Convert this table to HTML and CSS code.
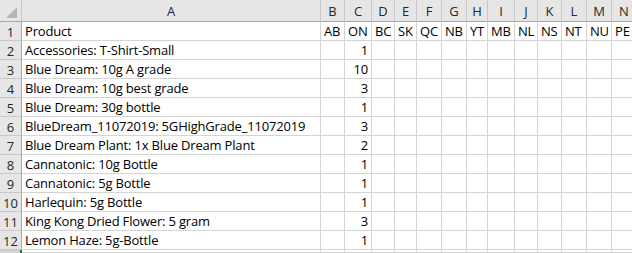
FILE: index.html
```html
<!DOCTYPE html>
<html>
<head>
<meta charset="utf-8">
<link rel="stylesheet" href="styles.css">
</head>
<body>
<div class="sheet">
  <div class="ch corner"><span class="tri"></span></div><div class="ch">A</div><div class="ch">B</div><div class="ch">C</div><div class="ch">D</div><div class="ch">E</div><div class="ch">F</div><div class="ch">G</div><div class="ch">H</div><div class="ch">I</div><div class="ch">J</div><div class="ch">K</div><div class="ch">L</div><div class="ch">M</div><div class="ch">N</div>

  <div class="rh">1</div><div class="c">Product</div><div class="c">AB</div><div class="c">ON</div><div class="c">BC</div><div class="c">SK</div><div class="c">QC</div><div class="c">NB</div><div class="c">YT</div><div class="c">MB</div><div class="c">NL</div><div class="c">NS</div><div class="c">NT</div><div class="c">NU</div><div class="c">PE</div>

  <div class="rh">2</div><div class="c">Accessories: T-Shirt-Small</div><div class="c"></div><div class="c n">1</div><div class="c"></div><div class="c"></div><div class="c"></div><div class="c"></div><div class="c"></div><div class="c"></div><div class="c"></div><div class="c"></div><div class="c"></div><div class="c"></div><div class="c"></div>

  <div class="rh">3</div><div class="c">Blue Dream: 10g A grade</div><div class="c"></div><div class="c n">10</div><div class="c"></div><div class="c"></div><div class="c"></div><div class="c"></div><div class="c"></div><div class="c"></div><div class="c"></div><div class="c"></div><div class="c"></div><div class="c"></div><div class="c"></div>

  <div class="rh">4</div><div class="c">Blue Dream: 10g best grade</div><div class="c"></div><div class="c n">3</div><div class="c"></div><div class="c"></div><div class="c"></div><div class="c"></div><div class="c"></div><div class="c"></div><div class="c"></div><div class="c"></div><div class="c"></div><div class="c"></div><div class="c"></div>

  <div class="rh">5</div><div class="c">Blue Dream: 30g bottle</div><div class="c"></div><div class="c n">1</div><div class="c"></div><div class="c"></div><div class="c"></div><div class="c"></div><div class="c"></div><div class="c"></div><div class="c"></div><div class="c"></div><div class="c"></div><div class="c"></div><div class="c"></div>

  <div class="rh">6</div><div class="c">BlueDream_11072019: 5GHighGrade_11072019</div><div class="c"></div><div class="c n">3</div><div class="c"></div><div class="c"></div><div class="c"></div><div class="c"></div><div class="c"></div><div class="c"></div><div class="c"></div><div class="c"></div><div class="c"></div><div class="c"></div><div class="c"></div>

  <div class="rh">7</div><div class="c">Blue Dream Plant: 1x Blue Dream Plant</div><div class="c"></div><div class="c n">2</div><div class="c"></div><div class="c"></div><div class="c"></div><div class="c"></div><div class="c"></div><div class="c"></div><div class="c"></div><div class="c"></div><div class="c"></div><div class="c"></div><div class="c"></div>

  <div class="rh">8</div><div class="c">Cannatonic: 10g Bottle</div><div class="c"></div><div class="c n">1</div><div class="c"></div><div class="c"></div><div class="c"></div><div class="c"></div><div class="c"></div><div class="c"></div><div class="c"></div><div class="c"></div><div class="c"></div><div class="c"></div><div class="c"></div>

  <div class="rh">9</div><div class="c">Cannatonic: 5g Bottle</div><div class="c"></div><div class="c n">1</div><div class="c"></div><div class="c"></div><div class="c"></div><div class="c"></div><div class="c"></div><div class="c"></div><div class="c"></div><div class="c"></div><div class="c"></div><div class="c"></div><div class="c"></div>

  <div class="rh">10</div><div class="c">Harlequin: 5g Bottle</div><div class="c"></div><div class="c n">1</div><div class="c"></div><div class="c"></div><div class="c"></div><div class="c"></div><div class="c"></div><div class="c"></div><div class="c"></div><div class="c"></div><div class="c"></div><div class="c"></div><div class="c"></div>

  <div class="rh">11</div><div class="c">King Kong Dried Flower: 5 gram</div><div class="c"></div><div class="c n">3</div><div class="c"></div><div class="c"></div><div class="c"></div><div class="c"></div><div class="c"></div><div class="c"></div><div class="c"></div><div class="c"></div><div class="c"></div><div class="c"></div><div class="c"></div>

  <div class="rh">12</div><div class="c">Lemon Haze: 5g-Bottle</div><div class="c"></div><div class="c n">1</div><div class="c"></div><div class="c"></div><div class="c"></div><div class="c"></div><div class="c"></div><div class="c"></div><div class="c"></div><div class="c"></div><div class="c"></div><div class="c"></div><div class="c"></div>

  <div class="rh sel"></div><div class="c"></div><div class="c"></div><div class="c"></div><div class="c"></div><div class="c"></div><div class="c"></div><div class="c"></div><div class="c"></div><div class="c"></div><div class="c"></div><div class="c"></div><div class="c"></div><div class="c"></div><div class="c"></div>
</div>
</body>
</html>
```

FILE: styles.css
```css
html, body {
  margin: 0;
  padding: 0;
  background: #ffffff;
  overflow: hidden;
}

.sheet {
  display: grid;
  grid-template-columns: 22px 299px 24px 27px 23px 22px 25px 25px 21px 27px 23px 24px 25px 25px 25px;
  grid-template-rows: 22px repeat(12, 19px) 3px;
  font-family: "Open Sans", "Noto Sans", sans-serif;
  font-size: 13px;
  letter-spacing: -0.18px;
  color: #000;
  width: 640px;
}

.ch {
  box-sizing: border-box;
  background: #e6e6e6;
  border-right: 1px solid #c8c8c8;
  border-bottom: 1px solid #a8a8a8;
  color: #262626;
  text-align: center;
  line-height: 21px;
  padding-top: 1px;
  overflow: hidden;
  letter-spacing: 0;
}

.corner {
  position: relative;
  border-right: 1px solid #c8c8c8;
}

.tri {
  position: absolute;
  right: 4px;
  bottom: 3px;
  width: 0;
  height: 0;
  border-left: 11px solid transparent;
  border-bottom: 11px solid #b5b5b5;
}

.rh {
  box-sizing: border-box;
  background: #e6e6e6;
  border-right: 1px solid #a8a8a8;
  border-bottom: 1px solid #c8c8c8;
  color: #262626;
  text-align: center;
  line-height: 19px;
  padding-top: 1px;
  overflow: hidden;
  letter-spacing: 0;
}

.rh.sel {
  background: #d2d2d2;
  border-right: 2px solid #217346;
  border-bottom: 0;
}

.c {
  box-sizing: border-box;
  border-right: 1px solid #d4d4d4;
  border-bottom: 1px solid #d4d4d4;
  line-height: 19px;
  padding: 0 3px;
  white-space: nowrap;
  overflow: visible;
}

.c.n {
  text-align: right;
}
```
